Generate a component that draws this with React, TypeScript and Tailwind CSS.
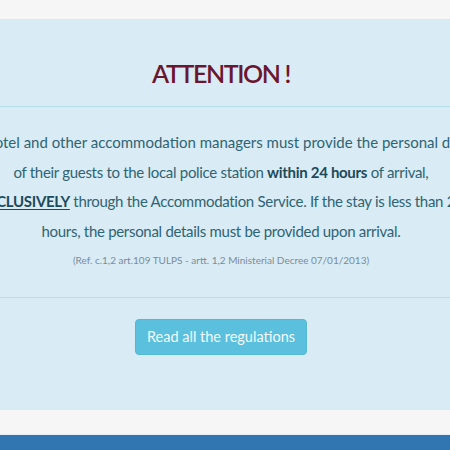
const font = { fontFamily: 'Lato, "Open Sans", sans-serif' };

function Rule() {
  return <div className="h-px w-full bg-[#b4dfe9]" />;
}

export default function App() {
  return (
    <div className="w-[450px] h-[450px] overflow-hidden bg-[#f6f6f6] flex flex-col" style={font}>
      <div className="h-[19px] shrink-0" />

      {/* notice panel */}
      <section className="h-[391px] shrink-0 bg-[#d9ebf5] flex flex-col">
        <h1 className="pt-[38px] pr-[8px] h-[70px] text-center text-[25px] leading-[32px] font-semibold text-[#6b1630] tracking-[-1.4px]">
          ATTENTION !
        </h1>
        <div className="mt-[17px]">
          <Rule />
        </div>

        <div className="pt-[21px] w-[800px] ml-[-179px] text-center text-[15px] leading-[29.5px] tracking-[-0.3px] text-[#2f6474] whitespace-nowrap">
          <p className="tracking-[0px]">The hotel and other accommodation managers must provide the personal details</p>
          <p>
            of their guests to the local police station{' '}
            <strong className="font-bold text-[#1c4a5b]">within 24 hours</strong> of arrival,
          </p>
          <p>
            <span className="underline underline-offset-2 font-bold text-[#1c4a5b]">EXCLUSIVELY</span> through the
            Accommodation Service. If the stay is less than 24
          </p>
          <p>hours, the personal details must be provided upon arrival.</p>
          <p className="mt-[6px] text-[10px] leading-[16px] tracking-normal text-[#7b8c96]">
            (Ref. c.1,2 art.109 TULPS - artt. 1,2 Ministerial Decree 07/01/2013)
          </p>
        </div>

        <div className="mt-[29px]">
          <Rule />
        </div>

        <div className="mt-[21px] flex justify-center pr-[8px]">
          <button className="h-[36px] w-[172px] rounded-[4px] bg-[#5bc0de] border border-[#52b8d6] text-[14.5px] text-[#f2fafd]">
            Read all the regulations
          </button>
        </div>
      </section>

      <div className="h-[24px] shrink-0 bg-[#f6f6f6]" />
      <div className="h-px shrink-0 bg-[#e4eef7]" />
      <div className="flex-1 bg-[#3276b1]" />
    </div>
  );
}
